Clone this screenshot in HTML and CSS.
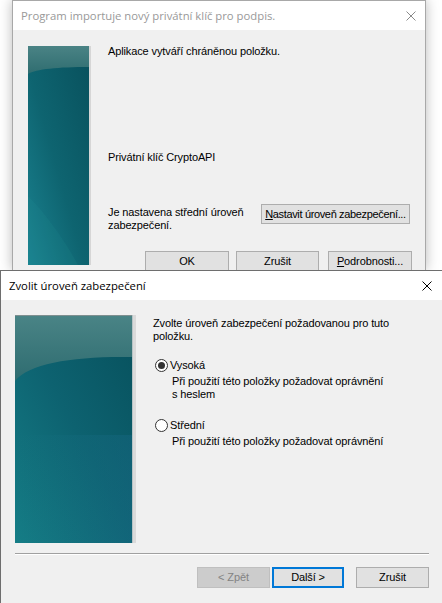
FILE: index.html
```html
<!DOCTYPE html>
<html lang="cs">
<head>
<meta charset="utf-8">
<title>Dialogs</title>
<link rel="stylesheet" href="styles.css">
</head>
<body>
<div class="dlg dlg-back">
  <div class="titlebar">
    <span class="title">Program importuje nový privátní klíč pro podpis.</span>
    <svg class="close" width="10" height="10" viewBox="0 0 10 10"><path d="M0.5 0.5 L9.5 9.5 M9.5 0.5 L0.5 9.5" stroke="#8a8a8a" stroke-width="1"/></svg>
  </div>
  <div class="content back-content">
    <svg class="side side-small" width="63" height="219" viewBox="0 0 63 219" preserveAspectRatio="none">
      <defs>
        <linearGradient id="bg1" x1="1" y1="0" x2="0" y2="1">
          <stop offset="0" stop-color="#08505c"/>
          <stop offset="0.55" stop-color="#0e6470"/>
          <stop offset="1" stop-color="#1a8290"/>
        </linearGradient>
        <linearGradient id="hl1" x1="0" y1="0" x2="0" y2="1">
          <stop offset="0" stop-color="#4a8385"/>
          <stop offset="1" stop-color="#2f6d70"/>
        </linearGradient>
      </defs>
      <rect width="63" height="219" fill="url(#bg1)"/>
      <path d="M0 0 H61 V21 C30 21 8 23 0 28 Z" fill="url(#hl1)"/>
      <path d="M0 150 C20 170 40 200 50 219 H0 Z" fill="#2a9aa0" opacity="0.12"/>
      <rect x="61" width="2" height="219" fill="#d6d6d6"/>
    </svg>
    <div class="col">
      <p class="line">Aplikace vytváří chráněnou položku.</p>
      <p class="line crypto">Privátní klíč CryptoAPI</p>
      <div class="level-row">
        <p class="level-text">Je nastavena střední úroveň zabezpečení.</p>
        <button class="btn btn-set"><u>N</u>astavit úroveň zabezpečení...</button>
      </div>
      <div class="btn-row back-btns">
        <button class="btn btn-w84">OK</button>
        <button class="btn btn-w83">Zrušit</button>
        <button class="btn btn-w84 btn-podr"><u>P</u>odrobnosti...</button>
      </div>
    </div>
  </div>
</div>

<div class="dlg dlg-front">
  <div class="titlebar front-title">
    <span class="title title-active">Zvolit úroveň zabezpečení</span>
    <svg class="close" width="10" height="10" viewBox="0 0 10 10"><path d="M0.5 0.5 L9.5 9.5 M9.5 0.5 L0.5 9.5" stroke="#000" stroke-width="1"/></svg>
  </div>
  <div class="content front-content">
    <div class="front-main">
      <svg class="side side-large" width="121" height="228" viewBox="0 0 121 228" preserveAspectRatio="none">
        <defs>
          <linearGradient id="bg2" x1="1" y1="0" x2="0" y2="1">
            <stop offset="0" stop-color="#07505c"/>
            <stop offset="0.5" stop-color="#0d6270"/>
            <stop offset="1" stop-color="#157d86"/>
          </linearGradient>
          <linearGradient id="hl2" x1="0" y1="0" x2="0" y2="1">
            <stop offset="0" stop-color="#4a8486"/>
            <stop offset="1" stop-color="#2e6c70"/>
          </linearGradient>
          <linearGradient id="br2" x1="0" y1="0" x2="1" y2="0">
            <stop offset="0" stop-color="#1a7a8a" stop-opacity="0"/>
            <stop offset="1" stop-color="#1a6a8a" stop-opacity="0.35"/>
          </linearGradient>
        </defs>
        <rect width="121" height="228" fill="url(#bg2)"/>
        <rect y="120" width="117" height="108" fill="url(#br2)"/>
        <path d="M0 0 H117 V42 C60 41 14 48 0 66 Z" fill="url(#hl2)"/>
        <rect width="118" height="1" fill="#7f8f90"/>
        <rect x="117" width="4" height="228" fill="#dadada"/>
        <rect x="117" width="1" height="228" fill="#b8c4c6"/>
      </svg>
      <div class="col front-col">
        <p class="line">Zvolte úroveň zabezpečení požadovanou pro tuto<br>položku.</p>
        <div class="radio-group first">
          <div class="radio-row"><span class="radio checked"></span><span>Vysoká</span></div>
          <p class="line desc">Při použití této položky požadovat oprávnění<br>s heslem</p>
        </div>
        <div class="radio-group second">
          <div class="radio-row"><span class="radio"></span><span>Střední</span></div>
          <p class="line desc">Při použití této položky požadovat oprávnění</p>
        </div>
      </div>
    </div>
    <div class="separator"></div>
    <div class="btn-row front-btns">
      <button class="btn btn-disabled btn-zpet">&lt; Zpět</button>
      <button class="btn btn-default">Další &gt;</button>
      <button class="btn btn-zrusit">Zrušit</button>
    </div>
  </div>
</div>
</body>
</html>
```

FILE: styles.css
```css
* { box-sizing: border-box; }
html, body { margin: 0; padding: 0; }
body {
  width: 442px;
  height: 603px;
  overflow: hidden;
  background: #ffffff;
  font-family: "Liberation Sans", Arial, sans-serif;
  font-size: 11px;
  letter-spacing: -0.12px;
  color: #000;
}
p { margin: 0; }

.dlg {
  background: #f0f0f0;
}
.dlg-back {
  margin-left: 12px;
  width: 414px;
  height: 270px;
  border: 1px solid #a8a8a8;
  border-bottom: none;
  box-shadow: 0 0 12px rgba(0,0,0,0.28);
  position: relative;
}
.dlg-front {
  width: 442px;
  height: 333px;
  border-top: 1px solid #6e6e6e;
  border-left: 1px solid #6e6e6e;
  position: relative;
}

.titlebar {
  height: 29px;
  background: #ffffff;
  display: flex;
  align-items: center;
  justify-content: space-between;
  padding-left: 8px;
  padding-right: 9px;
}
.front-title { padding-left: 8px; padding-right: 10px; }
.title {
  font-family: "Open Sans", "Noto Sans", sans-serif;
  font-size: 11.3px;
  letter-spacing: 0;
  color: #999999;
}
.title-active { color: #000; }
.close { display: block; }

.line { line-height: 13px; }

.back-content {
  display: flex;
  padding: 16px 13px 0 15px;
  gap: 17px;
}
.side { display: block; flex: none; }
.col {
  display: flex;
  flex-direction: column;
  flex: 1;
  margin-top: -1px;
}
.crypto { margin-top: 93px; }
.level-row {
  margin-top: 40px;
  display: flex;
  justify-content: space-between;
  align-items: flex-start;
  padding-right: 2px;
}
.level-text {
  width: 150px;
  line-height: 13px;
  margin-top: 2px;
}
.btn {
  font-family: "Liberation Sans", Arial, sans-serif;
  font-size: 11px;
  letter-spacing: -0.12px;
  color: #000;
  background: #e1e1e1;
  border: 1px solid #adadad;
  height: 21px;
  padding: 0;
  margin: 0;
  line-height: 19px;
  white-space: nowrap;
}
.btn-set {
  width: 149px;
  height: 20px;
  line-height: 18px;
  letter-spacing: -0.35px;
  overflow: hidden;
}
.btn-row {
  display: flex;
  justify-content: flex-end;
}
.back-btns {
  margin-top: 19px;
  gap: 7px;
}
.btn-w84 { width: 84px; }
.btn-w83 { width: 83px; }
.btn-podr { margin-left: 2px; }

.front-content {
  padding: 15px 13px 0 14px;
}
.front-main {
  display: flex;
  gap: 17px;
}
.front-col { margin-top: 2px; }
.radio-group.first { margin-top: 16px; }
.radio-group.second { margin-top: 18px; }
.radio-row {
  display: flex;
  align-items: center;
  height: 13px;
  line-height: 13px;
  gap: 2px;
  padding-left: 2px;
}
.radio {
  width: 13px;
  height: 13px;
  border-radius: 50%;
  border: 1px solid #333333;
  background: #ffffff;
  display: flex;
  align-items: center;
  justify-content: center;
  flex: none;
}
.radio.checked::after {
  content: "";
  width: 7px;
  height: 7px;
  border-radius: 50%;
  background: #333333;
}
.desc { padding-left: 19px; margin-top: 3px; }

.separator {
  margin-top: 10px;
  height: 2px;
  background: #a0a0a0;
  border-bottom: 1px solid #ffffff;
}
.front-btns {
  margin-top: 12px;
}
.btn-zpet, .btn-default, .btn-zrusit { width: 73px; }
.btn-disabled {
  background: #cccccc;
  border-color: #bfbfbf;
  color: #838383;
}
.btn-default {
  border: 2px solid #0078d7;
  line-height: 17px;
  margin-left: 2px;
  width: 72px;
}
.btn-zrusit { margin-left: 12px; }
```
